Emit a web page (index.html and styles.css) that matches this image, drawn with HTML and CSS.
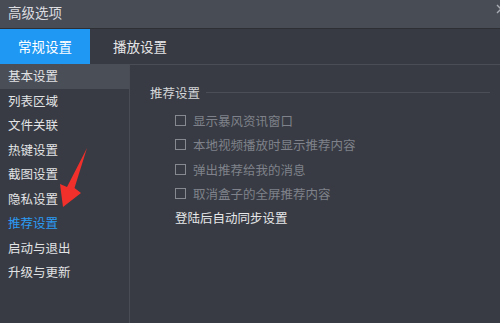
FILE: index.html
```html
<!DOCTYPE html>
<html lang="zh-CN">
<head>
<meta charset="utf-8">
<title>高级选项</title>
<link rel="stylesheet" href="styles.css">
</head>
<body>
<div class="window">
  <div class="titlebar">
    <span class="title">高级选项</span>
    <svg class="close" width="10" height="10" viewBox="0 0 10 10"><path d="M1 1 L9 9 M9 1 L1 9" stroke="#a9acb2" stroke-width="1.4" fill="none"/></svg>
  </div>
  <div class="tabs">
    <div class="tab active">常规设置</div>
    <div class="tab">播放设置</div>
  </div>
  <div class="body">
    <ul class="sidebar">
      <li class="item selected">基本设置</li>
      <li class="item">列表区域</li>
      <li class="item">文件关联</li>
      <li class="item">热键设置</li>
      <li class="item">截图设置</li>
      <li class="item">隐私设置</li>
      <li class="item current">推荐设置</li>
      <li class="item">启动与退出</li>
      <li class="item">升级与更新</li>
    </ul>
    <div class="content">
      <div class="group-title"><span>推荐设置</span><i class="rule"></i></div>
      <div class="options">
        <label class="opt"><span class="box"></span>显示暴风资讯窗口</label>
        <label class="opt"><span class="box"></span>本地视频播放时显示推荐内容</label>
        <label class="opt"><span class="box"></span>弹出推荐给我的消息</label>
        <label class="opt"><span class="box"></span>取消盒子的全屏推荐内容</label>
        <div class="sync">登陆后自动同步设置</div>
      </div>
    </div>
  </div>
  <svg class="arrow" width="40" height="70" viewBox="0 0 40 70">
    <polygon points="30,1 17.5,41 24,46 6,60 3,37 10,40" fill="#f2302b"/>
  </svg>
</div>
</body>
</html>
```

FILE: styles.css
```css
* { box-sizing: border-box; margin: 0; padding: 0; }
html, body { width: 500px; height: 323px; overflow: hidden; }
body {
  background: #383b43;
  font-family: "Noto Sans CJK SC", "Microsoft YaHei", sans-serif;
}
.window {
  position: relative;
  width: 500px;
  height: 323px;
  display: flex;
  flex-direction: column;
  background: #383b43;
}
.titlebar {
  height: 29px;
  background: #484c55;
  border-bottom: 1px solid #2d2f35;
  display: flex;
  align-items: center;
  justify-content: space-between;
  padding-left: 8px;
  flex: none;
}
.title {
  color: #dcdde0;
  font-size: 13.5px;
  line-height: 1;
  margin-top: -2px;
}
.close {
  margin-right: -6px;
  margin-top: -10px;
}
.tabs {
  height: 35px;
  display: flex;
  background: #373a42;
  flex: none;
}
.tab {
  width: 90px;
  display: flex;
  align-items: center;
  justify-content: center;
  color: #e6e6e8;
  font-size: 13.5px;
  padding-bottom: 2px;
}
.tab.active {
  background: #1f98f3;
  color: #ffffff;
}
.tab + .tab {
  width: auto;
  padding-left: 23px;
}
.body {
  flex: 1;
  display: flex;
}
.sidebar {
  list-style: none;
  width: 130px;
  border-right: 1px solid #494c54;
  flex: none;
}
.item {
  height: 24.5px;
  line-height: 24.5px;
  padding-left: 8px;
  font-size: 12.5px;
  color: #e2e3e5;
}
.item.selected {
  background: #4a4e57;
}
.item.current {
  color: #2b9af3;
}
.content {
  flex: 1;
  border-top: 1px solid #4a4d55;
  padding: 15px 10px 0 20px;
}
.group-title {
  display: flex;
  align-items: center;
  height: 24px;
  font-size: 12.5px;
  color: #d4d5d8;
  gap: 6px;
}
.rule {
  flex: 1;
  height: 1px;
  background: #4b4e56;
}
.options {
  padding-left: 25px;
  padding-top: 4px;
}
.opt {
  display: flex;
  align-items: center;
  height: 24.5px;
  font-size: 12.5px;
  color: #7f828a;
}
.box {
  width: 11px;
  height: 11px;
  border: 1px solid #868990;
  margin-right: 7px;
  flex: none;
}
.sync {
  height: 24.5px;
  line-height: 24.5px;
  font-size: 12.5px;
  color: #e6e7e9;
}
.arrow {
  position: absolute;
  left: 57px;
  top: 147px;
}
```
